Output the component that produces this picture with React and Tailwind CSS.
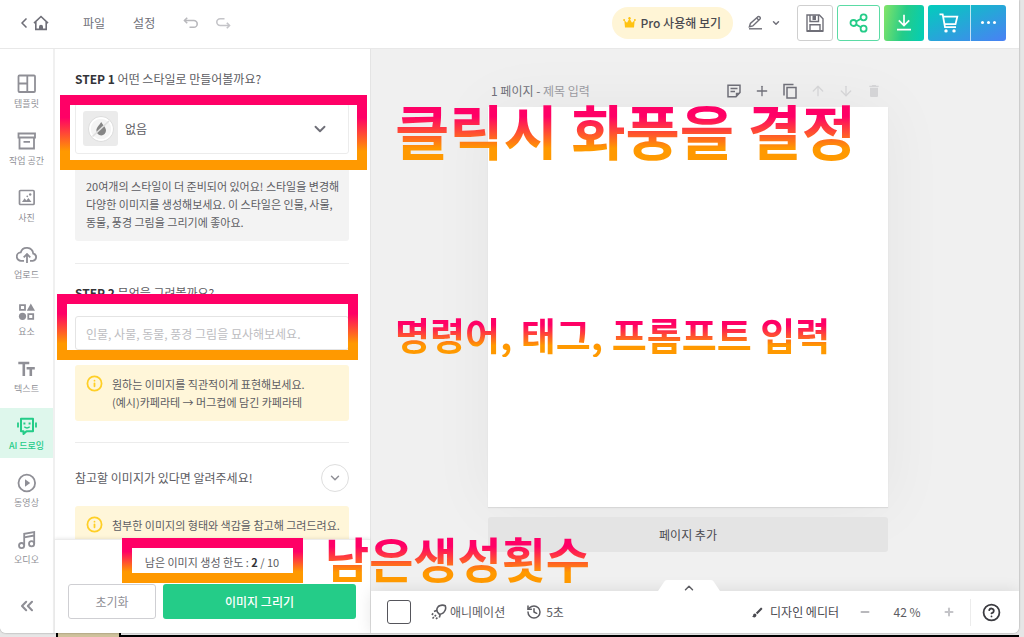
import {
  ArrowDown,
  ArrowUp,
  ChevronDown,
  ChevronLeft,
  ChevronsLeft,
  ChevronUp,
  CircleQuestionMark,
  Copy,
  History,
  Info,
  Minus,
  Plus,
} from "lucide-react";
import { MdBrush, MdDelete } from "react-icons/md";

function HomeIcon() {
  return (
    <svg width="16" height="16" viewBox="0 0 16 16" fill="none" stroke="currentColor" strokeWidth="1.6">
      <path d="M1 8.2 8 1.5l7 6.7" />
      <path d="M2.8 7v7.4h10.4V7" />
      <path d="M6 15v-3.2a2 2 0 0 1 4 0V15z" fill="currentColor" stroke="none" />
    </svg>
  );
}

function UndoIcon({ className }) {
  return (
    <svg className={className} width="15" height="12" viewBox="0 0 15 12" fill="none" stroke="currentColor" strokeWidth="1.6">
      <path d="M2 3.5h8.8a3.4 3.4 0 0 1 0 6.8H6.5" />
      <path d="M4.2.8 1.5 3.5l2.7 2.7" />
    </svg>
  );
}

function CrownIcon() {
  return (
    <svg width="13" height="11" viewBox="0 0 13 11" fill="#ffc312">
      <path d="M1.3 3.2 4 5.8 6.5 1.5 9 5.8l2.7-2.6-.7 7.3H2z" />
      <circle cx="6.5" cy="1.3" r="1.2" />
      <circle cx="1.1" cy="3" r="1" />
      <circle cx="11.9" cy="3" r="1" />
    </svg>
  );
}

function PenIcon() {
  return (
    <svg width="15" height="15" viewBox="0 0 15 15" fill="none" stroke="currentColor" strokeWidth="1.4">
      <path d="M1 13.8h13" />
      <path d="m1.4 11.8 1-3.3L9.6 1.900c.8-.7 1.600-.5 2.200.1.7.8.7 1.500 0 2.200l-7 6.700z" />
      <path d="m8.600 2.900 2.300 2.300" />
    </svg>
  );
}

function SaveIcon() {
  return (
    <svg width="18" height="18" viewBox="0 0 18 18" fill="none" stroke="currentColor" strokeWidth="1.4">
      <path d="M1 1h12.3L17 4.7V17H1z" />
      <path d="M4 1v6.5h8.5V1M4 17v-6.3h10V17" />
      <path d="M6.5 1.5H10V6H6.5z" fill="currentColor" stroke="none" />
      <path d="M1 17h16" strokeWidth="2" />
    </svg>
  );
}

function ShareIcon() {
  return (
    <svg width="20" height="20" viewBox="0 0 20 20" fill="none" stroke="currentColor" strokeWidth="1.8">
      <circle cx="4.5" cy="10" r="3" />
      <circle cx="14.6" cy="4.3" r="3" />
      <circle cx="14.6" cy="15.7" r="3" />
      <path d="m7.1 8.5 4.9-2.7M7.1 11.5l4.9 2.7" />
    </svg>
  );
}

function DownloadIcon() {
  return (
    <svg width="16" height="17" viewBox="0 0 16 17" fill="none" stroke="currentColor" strokeWidth="1.7">
      <path d="M8 .8v10.4M2.8 6.3 8 11.5l5.2-5.2M1 15.6h14" />
    </svg>
  );
}

function CartIcon() {
  return (
    <svg width="20" height="20" viewBox="0 0 20 20" fill="none" stroke="currentColor" strokeWidth="1.8">
      <path d="M.5 1.3h3.2L6 14.2h11" />
      <path d="M4.5 3.6h13.8l-1.8 7.6H6" />
      <circle cx="7" cy="17.9" r="1.7" fill="currentColor" stroke="none" />
      <circle cx="15" cy="17.9" r="1.7" fill="currentColor" stroke="none" />
    </svg>
  );
}

function TemplateIcon() {
  return (
    <svg width="20" height="20" viewBox="0 0 20 20" fill="none" stroke="currentColor" strokeWidth="1.8">
      <rect x="1.5" y="1.5" width="16.5" height="16.5" rx="1" />
      <path d="M10.3 2v16M2 9.5h8.3" />
    </svg>
  );
}

function ArchiveIcon() {
  return (
    <svg width="20" height="20" viewBox="0 0 20 20" fill="none" stroke="currentColor" strokeWidth="1.8">
      <path d="M1.5 2.5H18v4H1.5zM2.5 6.5v11H17v-11M6.5 10.800H13" />
    </svg>
  );
}

function PhotoIcon() {
  return (
    <svg width="20" height="20" viewBox="0 0 20 20" fill="none" stroke="currentColor" strokeWidth="1.7">
      <rect x="2.5" y="2.5" width="14.6" height="14" rx="1" />
      <path d="m5 14 2.6-3.8 1.8 2.4 2-2.5 3.1 3.9z" fill="currentColor" stroke="none" />
      <circle cx="13.2" cy="6.5" r="1.2" fill="currentColor" stroke="none" />
      <circle cx="10.3" cy="8.3" r=".9" fill="currentColor" stroke="none" />
    </svg>
  );
}

function UploadIcon() {
  return (
    <svg width="22" height="20" viewBox="0 0 22 20" fill="none" stroke="currentColor" strokeWidth="1.8">
      <path d="M8 15.8H5.3a4.2 4.2 0 0 1-.6-8.4 6.4 6.4 0 0 1 12.5 1.1 3.7 3.7 0 0 1-.4 7.3H14" />
      <path d="M11 18V9.3M7.7 12.4 11 9.1l3.3 3.3" />
    </svg>
  );
}

function ShapesIcon() {
  return (
    <svg width="20" height="20" viewBox="0 0 20 20" fill="currentColor">
      <path d="M3 3.2h5v4.6H3z" fill="none" stroke="currentColor" strokeWidth="1.8" />
      <path d="M13.8 1.6 18 8.8H9.8z" />
      <circle cx="5.5" cy="14.3" r="3.6" />
      <path d="M11.3 12.2h4.9v4.6h-4.9z" fill="none" stroke="currentColor" strokeWidth="1.8" />
    </svg>
  );
}

function TypeIcon() {
  return (
    <svg width="20" height="20" viewBox="0 0 20 20" fill="none" stroke="currentColor" strokeWidth="2.6">
      <path d="M1.3 4h11M6.8 4v13M9.6 9.3h8.2M13.8 9.3V17" />
    </svg>
  );
}

function RobotIcon() {
  return (
    <svg width="20" height="20" viewBox="0 0 20 20" fill="none" stroke="currentColor" strokeWidth="2">
      <path d="M4 2.8h12v12.4H9.5L6.5 18v-2.8H4z" strokeLinejoin="round" />
      <path d="M1 6.5v5M19 6.5v5" strokeWidth="1.8" />
      <path d="M6.4 7.5h2M11.6 7.5h2" strokeWidth="1.8" />
      <path d="M7.3 10.8c1.6 1.4 3.8 1.4 5.4 0" strokeWidth="1.5" />
    </svg>
  );
}

function PlayIcon() {
  return (
    <svg width="20" height="20" viewBox="0 0 20 20" fill="none" stroke="currentColor" strokeWidth="1.8">
      <circle cx="9.8" cy="10" r="8.3" />
      <path d="m8 6.2 5.2 3.8L8 13.8z" fill="currentColor" stroke="none" />
    </svg>
  );
}

function MusicIcon() {
  return (
    <svg width="20" height="20" viewBox="0 0 20 20" fill="none" stroke="currentColor" strokeWidth="1.8">
      <circle cx="4.6" cy="15.6" r="2.6" />
      <circle cx="14.6" cy="13.8" r="2.6" />
      <path d="M7.2 15.6V3.8L17.2 2v11.8M7.2 7.3l10-1.8" />
    </svg>
  );
}

function NoStyleIcon() {
  return (
    <svg width="28" height="28" viewBox="0 0 28 28" fill="none">
      <circle cx="14" cy="14" r="12.5" fill="#f4f4f4" stroke="#dcdcdc" />
      <circle cx="14" cy="14" r="11" stroke="#fff" strokeWidth="1.5" />
      <path d="M14.2 7c2.7 4 4.8 5.8 4.8 8.6a4.8 4.8 0 0 1-9.6 0c0-2.8 2.1-4.6 4.8-8.6z" fill="#858585" />
      <path d="M5.5 21.5 22 6" stroke="#dfdfdf" strokeWidth="1.6" />
    </svg>
  );
}

function NoteIcon() {
  return (
    <svg width="14" height="14" viewBox="0 0 14 14" fill="none" stroke="currentColor" strokeWidth="1.5">
      <path d="M1 1.2h12v7.3l-4 4.3H1z" />
      <path d="M3.5 4.5h7M3.5 7.5H8" />
      <path d="M8.8 13V8.8H13z" fill="currentColor" stroke="none" />
    </svg>
  );
}

function CopyIcon() {
  return (
    <svg width="16" height="16" viewBox="0 0 16 16" fill="none" stroke="currentColor" strokeWidth="1.5">
      <path d="M5 4.500h9V15H5z" />
      <path d="M2 12.500V1.500h9.500" />
    </svg>
  );
}

function RocketIcon() {
  return (
    <svg width="16" height="16" viewBox="0 0 16 16" fill="none" stroke="currentColor" strokeWidth="1.6">
      <path d="M6.6 8.3C5 5.5 6.3 2 9.6 1.4c1.8-.4 3.600-.2 4.600.3.500 1.200.7 3-.1 4.600-1 2.400-3.200 3.800-5.600 4z" />
      <path d="M6 6.300 3 7.600M9.300 10.200l-1 3.400" />
      <path d="m1.500 14.500 3.600-3.600M.8 10.800l1.800-1.700M5 15l1.800-1.800" strokeDasharray="2 1" />
    </svg>
  );
}

const sideItems = [
  { label: "템플릿", icon: TemplateIcon },
  { label: "작업 공간", icon: ArchiveIcon },
  { label: "사진", icon: PhotoIcon },
  { label: "업로드", icon: UploadIcon },
  { label: "요소", icon: ShapesIcon },
  { label: "텍스트", icon: TypeIcon },
  { label: "AI 드로잉", icon: RobotIcon, active: true },
  { label: "동영상", icon: PlayIcon },
  { label: "오디오", icon: MusicIcon },
];

function Header() {
  return (
    <header className="flex h-[49px] shrink-0 items-center border-b border-[#e8e8e8] bg-white pr-[13px] pb-[3px] pl-4 text-[#6f6f78]">
      <a href="#" aria-label="홈" className="flex items-center gap-px">
        <ChevronLeft size={16} strokeWidth={2.5} />
        <HomeIcon />
      </a>
      <nav className="flex items-center pl-[34px] text-[12px]">
        <button>파일</button>
        <button className="ml-7">설정</button>
        <button aria-label="실행 취소" className="ml-7 text-[#b8b8bc]"><UndoIcon /></button>
        <button aria-label="다시 실행" className="ml-[18px] text-[#c4c4c8]"><UndoIcon className="rotate-180" /></button>
      </nav>

      <div className="ml-auto flex items-center">
        <button className="flex h-8 items-center gap-1 rounded-full bg-[#fff5d6] pr-3 pl-[11px] text-[12px] font-medium text-[#4a4a50]">
          <CrownIcon /> Pro 사용해 보기
        </button>
        <button aria-label="편집 모드" className="ml-[15px] flex items-center gap-2">
          <PenIcon /> <ChevronDown size={10} strokeWidth={3.5} />
        </button>
        <button aria-label="저장" className="ml-4 flex h-9 w-9 items-center justify-center rounded-[3px] border border-[#cfcfcf] text-[#6f6f78]">
          <SaveIcon />
        </button>
        <button aria-label="공유" className="ml-1 flex h-9 w-[43px] items-center justify-center rounded-[3px] border border-[#5bdba5] text-[#24cc88]">
          <ShareIcon />
        </button>
        <button aria-label="다운로드" className="ml-1 flex h-9 w-10 items-center justify-center rounded-[3px] bg-linear-100/srgb from-[#84e468] via-[#24cc88] to-[#02cdb8] text-white">
          <DownloadIcon />
        </button>
        <div className="ml-1 flex h-9 overflow-hidden rounded-[3px] bg-linear-to-br/srgb from-[#02cdbb] to-[#4a80f5] text-white">
          <button aria-label="장바구니" className="flex w-[43px] items-center justify-center border-r border-white/70"><CartIcon /></button>
          <button aria-label="더보기" className="flex w-[35px] items-center justify-center gap-[3px]">
            <span className="size-[3px] rounded-full bg-white" />
            <span className="size-[3px] rounded-full bg-white" />
            <span className="size-[3px] rounded-full bg-white" />
          </button>
        </div>
      </div>
    </header>
  );
}

function Sidebar() {
  return (
    <nav className="flex w-[55px] shrink-0 flex-col border-r-2 border-[#f0f0f0] bg-white pt-[17px] text-[#8f8f96]">
      <div className="flex flex-col gap-[7px]">
        {sideItems.map(({ label, icon: Icon, active }) => (
          <button
            key={label}
            className={`flex h-[50px] flex-col items-center justify-center gap-1 pt-0.5 text-[9px] leading-3 ${
              active ? "bg-[#def7ec] font-medium text-[#24cc88]" : ""
            }`}
          >
            <Icon />
            {label}
          </button>
        ))}
      </div>
      <button aria-label="메뉴 접기" className="mt-auto mb-[17px] flex justify-center">
        <ChevronsLeft size={20} strokeWidth={2.5} />
      </button>
    </nav>
  );
}

function Notice({ children }) {
  return (
    <div className="flex gap-[9px] rounded-[3px] bg-[#fff6d9] px-[11px] py-[10px] text-[11px] leading-[18px]">
      <Info size={17} strokeWidth={2.5} className="shrink-0 text-[#ffcf26]" />
      <p className="whitespace-nowrap">{children}</p>
    </div>
  );
}

function DrawPanel() {
  return (
    <section className="flex w-[316px] shrink-0 flex-col border-r border-[#e4e4e4] bg-white text-[#5c5c62]">
      <div className="min-h-0 flex-1 overflow-hidden pt-[21px] pr-[21px] pl-5">
        <label htmlFor="style" className="block text-[12px] leading-[18px]">
          <b className="font-bold text-[#333338]">STEP 1</b> 어떤 스타일로 만들어볼까요?
        </label>
        <div className="mt-[15px] flex h-[51px] items-center rounded-[3px] border border-[#ececec] px-[7px]">
          <span className="flex size-[35px] shrink-0 items-center justify-center rounded-[3px] bg-[#ebebeb]">
            <NoStyleIcon />
          </span>
          <select id="style" className="min-w-0 flex-1 appearance-none pl-[7px] text-[12px] outline-none">
            <option>없음</option>
          </select>
          <ChevronDown size={18} strokeWidth={2.5} className="mr-3 text-[#6f6f78]" />
        </div>
        <p className="mt-[11px] rounded-[3px] bg-[#f3f3f3] pt-3 pb-[10px] pl-[11px] text-[11px] leading-[18px] whitespace-nowrap">
          20여개의 스타일이 더 준비되어 있어요! 스타일을 변경해
          <br />
          다양한 이미지를 생성해보세요. 이 스타일은 인물, 사물,
          <br />
          동물, 풍경 그림을 그리기에 좋아요.
        </p>

        <hr className="mt-[22px] border-[#ececec]" />

        <label htmlFor="prompt" className="mt-5 block text-[12px] leading-[18px]">
          <b className="font-bold text-[#333338]">STEP 2</b> 무엇을 그려볼까요?
        </label>
        <input
          id="prompt"
          type="text"
          placeholder="인물, 사물, 동물, 풍경 그림을 묘사해보세요."
          className="mt-[14px] mb-[15px] block h-[34px] w-full rounded-[3px] border border-[#e4e4e4] px-[10px] text-[12px] outline-none placeholder:text-[#bdbdc1]"
        />
        <Notice>
          원하는 이미지를 직관적이게 표현해보세요.
          <br />
          (예시)카페라테 → 머그컵에 담긴 카페라테
        </Notice>

        <hr className="mt-[21px] border-[#ececec]" />

        <div className="mt-[21px] mb-[14px] flex items-center justify-between text-[12px]">
          <span>참고할 이미지가 있다면 알려주세요!</span>
          <button aria-label="펼치기" className="flex size-7 items-center justify-center rounded-full border border-[#dedede] text-[#8f8f96]">
            <ChevronDown size={14} strokeWidth={2.5} />
          </button>
        </div>
        <Notice>첨부한 이미지의 형태와 색감을 참고해 그려드려요.</Notice>
      </div>

      <div className="shrink-0 border-t border-[#ececec] pt-[13px] pr-[14px] pb-[14px] pl-[13px] shadow-[0_-1px_3px_rgba(0,0,0,0.08)]">
        <p className="text-center text-[11px] leading-[18px]">
          남은 이미지 생성 한도 : <b className="text-[#333338]">2</b> / 10
        </p>
        <div className="mt-[13px] flex gap-[7px] text-[12px]">
          <button className="h-[35px] w-[88px] rounded-[3px] border border-[#cfcfd3] text-[#8f8f96]">초기화</button>
          <button className="h-[35px] flex-1 rounded-[3px] bg-[#24cc88] font-medium text-white">이미지 그리기</button>
        </div>
      </div>
    </section>
  );
}

function Workspace() {
  return (
    <main className="flex min-w-0 flex-1 flex-col bg-[#f0f0f0]">
      <div className="min-h-0 flex-1 overflow-hidden pt-7 pr-[14px]">
        <div className="mx-auto w-[400px] max-w-full">
          <div className="flex h-[30px] items-center pb-[3px] text-[12px] text-[#6f6f78]">
            <span className="pl-[3px]">1 페이지 -&nbsp;</span>
            <span className="text-[#9a9aa0]">제목 입력</span>
            <div className="ml-auto flex items-center gap-3 pr-[6px]">
              <button aria-label="메모" className="flex w-4 justify-center"><NoteIcon /></button>
              <button aria-label="페이지 추가"><Plus size={16} /></button>
              <button aria-label="페이지 복제"><CopyIcon /></button>
              <button aria-label="위로" className="text-[#d4d4d6]"><ArrowUp size={16} /></button>
              <button aria-label="아래로" className="text-[#d4d4d6]"><ArrowDown size={16} /></button>
              <button aria-label="삭제" className="text-[#d4d4d6]"><MdDelete size={16} /></button>
            </div>
          </div>
          <div className="aspect-square w-full bg-white shadow-[0_0_60px_rgba(0,0,0,0.05),0_1px_1px_rgba(0,0,0,0.08)]" />
          <button className="mt-[10px] h-[35px] w-full rounded-[3px] bg-[#e4e4e4] text-[12px] text-[#4a4a50]">
            페이지 추가
          </button>
        </div>
      </div>

      <footer className="relative flex h-[42px] shrink-0 items-center bg-white pr-[18px] pl-4 text-[12px] text-[#5c5c62] shadow-[0_0_16px_rgba(0,0,0,0.1)]">
        <button aria-label="페이지 목록" className="absolute bottom-full left-[287px] h-[11px] w-[62px]">
          <svg width="62" height="11" viewBox="0 0 62 11" fill="#fff"><path d="M0 11 6 2q1-2 3-2h44q2 0 3 2l6 9z" /></svg>
          <ChevronUp size={14} strokeWidth={2.5} className="absolute top-px left-6" />
        </button>
        <button aria-label="배경색" className="size-6 rounded-[3px] border border-[#55555b] bg-white" />
        <button className="ml-5 flex items-center gap-[3px]"><RocketIcon /> 애니메이션</button>
        <button className="ml-[21px] flex items-center gap-1"><History size={16} strokeWidth={2.25} /> 5초</button>

        <button className="ml-auto flex items-center gap-[6px] text-[#4a4a50]"><MdBrush size={13} /> 디자인 에디터</button>
        <button aria-label="축소" className="ml-5 text-[#b8b8bc]"><Minus size={12} strokeWidth={4} /></button>
        <span className="w-[72px] text-center">42 %</span>
        <button aria-label="확대" className="text-[#c4c4c8]"><Plus size={12} strokeWidth={4} /></button>
        <button aria-label="도움말" className="ml-[15px] border-l border-[#ececec] py-1 pl-[11px] text-[#3b3b40]">
          <CircleQuestionMark size={19} strokeWidth={2.25} />
        </button>
      </footer>
    </main>
  );
}

function HighlightBox({ className }) {
  return (
    <div
      className={`absolute border-[10px] [border-image:linear-gradient(to_bottom,#ff0066_30%,#ff9900_75%)_10] ${className}`}
    />
  );
}

function Callout({ className, children }) {
  return (
    <p className={`absolute bg-linear-to-b/srgb from-[#ff0066] from-30% to-[#ff9900] to-75% bg-clip-text leading-[1.2] font-bold whitespace-nowrap text-transparent ${className}`}>
      {children}
    </p>
  );
}

function GuideMarks() {
  return (
    <div className="pointer-events-none absolute inset-0 z-10">
      <HighlightBox className="top-[95px] left-[60px] h-[75px] w-[307px]" />
      <HighlightBox className="top-[294px] left-[57px] h-[66px] w-[301px]" />
      <HighlightBox className="bottom-[50px] left-[122px] h-[45px] w-[181px]" />
      <Callout className="top-[95px] left-[395px] text-[59px]">클릭시 화풍을 결정</Callout>
      <Callout className="top-[311px] left-[395px] text-[38px]">명령어, 태그, 프롬프트 입력</Callout>
      <Callout className="bottom-[46px] left-[325px] text-[48px]">남은생성횟수</Callout>
    </div>
  );
}

export default function App() {
  return (
    <div className="flex h-screen flex-col overflow-hidden bg-[#e6e6e6] pr-[5px] font-['Noto_Sans_CJK_KR',sans-serif]">
      <div className="relative flex min-h-0 flex-1 flex-col rounded-b-md bg-white shadow-[0_0_2px_rgba(0,0,0,0.4)]">
        <Header />
        <div className="flex min-h-0 flex-1 overflow-hidden rounded-b-md">
          <Sidebar />
          <DrawPanel />
          <Workspace />
        </div>
        <GuideMarks />
      </div>
      {/* sheet showing under the editor window */}
      <div className="ml-[56px] flex h-1 shrink-0">
        <div className="w-[65px] border-x-2 border-black bg-[#cfc29c]" />
        <div className="mt-0.5 flex-1 border-t-2 border-black bg-[#bdbdbd]" />
      </div>
    </div>
  );
}
